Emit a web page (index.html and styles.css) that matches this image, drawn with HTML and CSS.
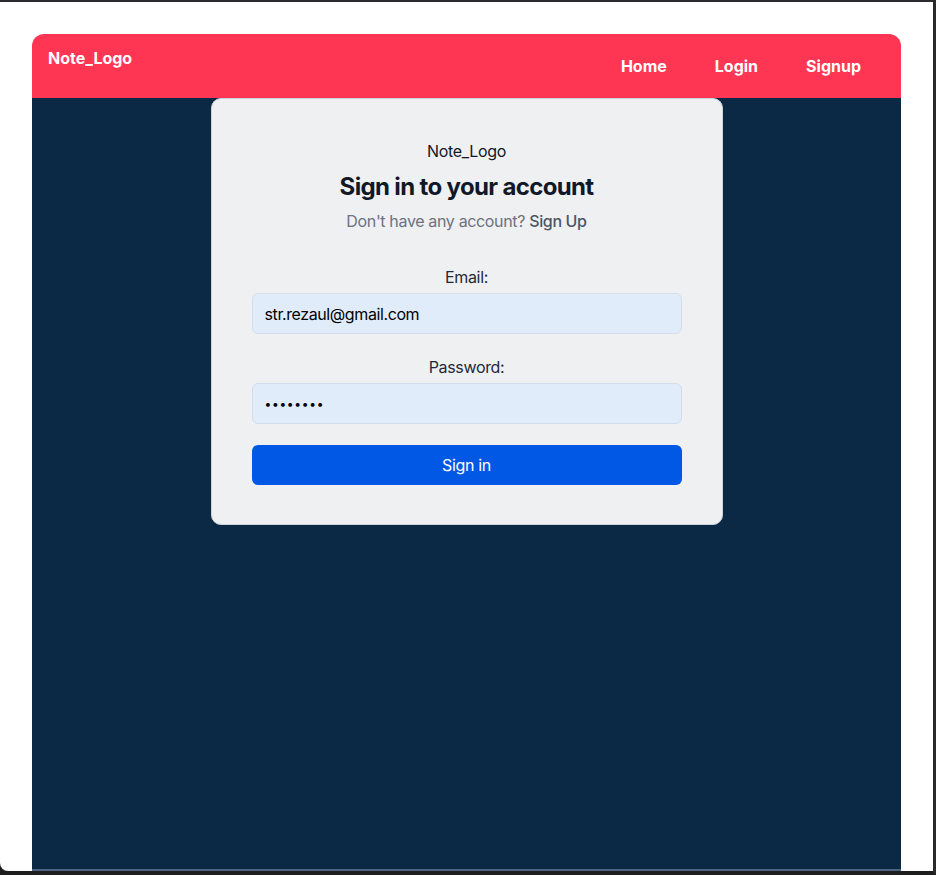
FILE: index.html
```html
<!DOCTYPE html>
<html lang="en">
<head>
<meta charset="utf-8">
<title>Sign in</title>
<link rel="stylesheet" href="styles.css">
</head>
<body>
<div class="frame">
  <div class="page">
    <div class="app">
      <nav class="navbar">
        <a class="brand" href="#">Note_Logo</a>
        <ul class="nav-links">
          <li><a href="#">Home</a></li>
          <li><a href="#">Login</a></li>
          <li><a href="#">Signup</a></li>
        </ul>
      </nav>
      <main class="main">
        <div class="card">
          <div class="card-logo">Note_Logo</div>
          <h1 class="card-title">Sign in to your account</h1>
          <p class="card-sub">Don't have any account? <a href="#" class="sub-link">Sign Up</a></p>
          <form class="form">
            <label class="field">
              <span class="label">Email:</span>
              <input class="input" type="email" value="str.rezaul@gmail.com">
            </label>
            <label class="field">
              <span class="label">Password:</span>
              <input class="input input-pass" type="text" value="••••••••">
            </label>
            <button class="btn" type="button">Sign in</button>
          </form>
        </div>
      </main>
    </div>
  </div>
</div>
</body>
</html>
```
FILE: styles.css
```css
* { box-sizing: border-box; }
html, body { margin: 0; padding: 0; height: 100%; }
body {
  font-family: Inter, "Noto Sans", "Liberation Sans", sans-serif;
  background: #1e1e20;
}
.frame {
  height: 100vh;
  border-top: 2px solid #2a2a2e;
  border-right: 3px solid #2a2a2e;
  border-bottom: 4px solid #1e1e20;
  background: #1e1e20;
  display: flex;
  flex-direction: column;
}
.page {
  flex: 1;
  background: #ffffff;
  border-bottom-left-radius: 8px;
  padding: 32px 32px 0 32px;
  display: flex;
  flex-direction: column;
  min-height: 0;
}
.app {
  flex: 1;
  display: flex;
  flex-direction: column;
  min-height: 0;
}
.navbar {
  height: 64px;
  background: #ff3653;
  border-radius: 12px 12px 0 0;
  display: flex;
  justify-content: space-between;
  padding: 0 40px 0 16px;
}
.brand {
  color: #fff;
  font-weight: 700;
  font-size: 16px;
  text-decoration: none;
  padding-top: 14px;
  line-height: 20px;
}
.nav-links {
  list-style: none;
  margin: 0;
  padding: 0;
  display: flex;
  align-items: center;
  gap: 48px;
}
.nav-links a {
  color: #fff;
  font-weight: 700;
  font-size: 16px;
  text-decoration: none;
}
.main {
  flex: 1;
  background: #0b2945;
  border-bottom: 2px solid #4a6380;
  display: flex;
  justify-content: center;
  align-items: flex-start;
}
.card {
  width: 512px;
  background: #eff0f2;
  border: 1px solid #cfd2d8;
  border-radius: 10px;
  padding: 39px 40px 39px;
  text-align: center;
  color: #111827;
  letter-spacing: -0.35px;
}
.card-logo {
  font-size: 16px;
  line-height: 24px;
  margin-top: 1px;
}
.card-title {
  font-size: 24px;
  line-height: 32px;
  font-weight: 700;
  margin: 8px 0 0;
  color: #111827;
  letter-spacing: -0.65px;
}
.card-sub {
  margin: 6px 0 0;
  font-size: 16px;
  line-height: 24px;
  color: #6b7280;
}
.sub-link {
  color: #4b5563;
  font-weight: 500;
  text-decoration: none;
}
.form {
  margin-top: 32px;
  display: flex;
  flex-direction: column;
}
.field {
  display: flex;
  flex-direction: column;
  align-items: stretch;
  margin-bottom: 21px;
}
.label {
  font-size: 16px;
  line-height: 24px;
  color: #1f2937;
  margin-bottom: 4px;
}
.input {
  height: 41px;
  border: 1px solid #d3deed;
  border-radius: 6px;
  background: #e1ecfa;
  font-family: inherit;
  font-size: 16px;
  letter-spacing: -0.4px;
  color: #000;
  padding: 0 12px;
  outline: none;
}
.input-pass {
  font-size: 12px;
  letter-spacing: 0.7px;
}
.btn {
  height: 40px;
  border: none;
  border-radius: 6px;
  background: #0058e5;
  color: #fff;
  font-family: inherit;
  font-size: 16px;
  letter-spacing: -0.35px;
  cursor: pointer;
}
```
